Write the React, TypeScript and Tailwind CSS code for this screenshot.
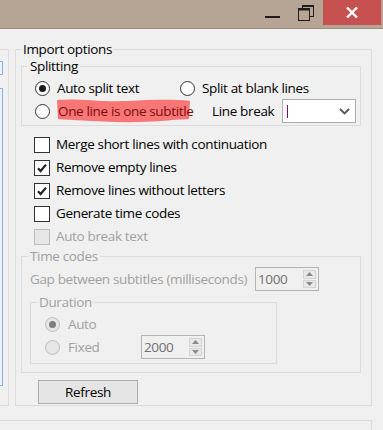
import { ReactNode } from "react";

function Radio({ checked, disabled }: { checked?: boolean; disabled?: boolean }) {
  return (
    <span
      className={`flex h-[15px] w-[15px] shrink-0 items-center justify-center rounded-full border ${
        disabled ? "border-[#bcbcbc] bg-[#e6e6e6]" : "border-[#333333] bg-white"
      }`}
    >
      {checked && (
        <span className={`h-[7px] w-[7px] rounded-full ${disabled ? "bg-[#7d7d7d]" : "bg-[#1b1b1b]"}`} />
      )}
    </span>
  );
}

function Checkbox({ checked, disabled }: { checked?: boolean; disabled?: boolean }) {
  return (
    <span
      className={`flex h-[16px] w-[16px] shrink-0 items-center justify-center border ${
        disabled ? "border-[#bcbcbc] bg-[#e6e6e6]" : "border-[#333333] bg-white"
      }`}
    >
      {checked && (
        <svg width="12" height="12" viewBox="0 0 12 12">
          <path d="M2 6.2 L4.6 9 L10 2.6" fill="none" stroke="#222" strokeWidth="2.2" />
        </svg>
      )}
    </span>
  );
}

function Spin({ value }: { value: string }) {
  return (
    <div className="flex h-[24px] w-[64px] shrink-0 items-stretch border border-[#b4b4b4] bg-[#f0f0f0]">
      <span className="flex flex-1 items-center pl-[2px] text-[#6f6f6f]">{value}</span>
      <div className="my-[2px] mr-[2px] flex w-[13px] flex-col gap-[1px]">
        <span className="flex flex-1 items-center justify-center border border-[#d4d4d4] bg-[#e8e8e8]">
          <svg width="7" height="4" viewBox="0 0 7 4">
            <path d="M0 4 L3.5 0 L7 4 Z" fill="#8a8a8a" />
          </svg>
        </span>
        <span className="flex flex-1 items-center justify-center border border-[#d4d4d4] bg-[#e8e8e8]">
          <svg width="7" height="4" viewBox="0 0 7 4">
            <path d="M0 0 L3.5 4 L7 0 Z" fill="#8a8a8a" />
          </svg>
        </span>
      </div>
    </div>
  );
}

function Group({
  title,
  disabled,
  className,
  children,
}: {
  title: string;
  disabled?: boolean;
  className?: string;
  children: ReactNode;
}) {
  return (
    <fieldset className={`border border-[#dcdcdc] ${className ?? ""}`}>
      <legend
        className={`ml-[6px] px-[2px] leading-[16px] ${disabled ? "text-[#a0a0a0]" : "text-black"}`}
      >
        {title}
      </legend>
      {children}
    </fieldset>
  );
}

export default function App() {
  const checks = [
    { label: "Merge short lines with continuation", checked: false },
    { label: "Remove empty lines", checked: true },
    { label: "Remove lines without letters", checked: true },
    { label: "Generate time codes", checked: false },
  ];

  return (
    <div className="flex h-[430px] w-[383px] flex-col overflow-hidden bg-[#f0f0f0] font-['Open_Sans',sans-serif] text-[13.5px] tracking-[-0.35px] text-black">
      {/* title bar */}
      <div className="flex h-[29px] shrink-0 items-start justify-end border-b border-[#9e8e7e] bg-[#b6a595]">
        <div className="flex h-[25px] w-[34px] flex-col items-center justify-end pb-[7px]">
          <div className="h-[2px] w-[15px] bg-[#1e1e1e]" />
        </div>
        <div className="flex h-[25px] w-[34px] items-center justify-center">
          <svg width="16" height="16" viewBox="0 0 16 16">
            <rect x="4.5" y="0.5" width="11" height="11" fill="none" stroke="#1e1e1e" />
            <rect x="4" y="0" width="12" height="2" fill="#1e1e1e" />
            <rect x="0.5" y="3.5" width="11" height="12" fill="#b6a595" stroke="#1e1e1e" />
            <rect x="0" y="3" width="12" height="2.5" fill="#1e1e1e" />
          </svg>
        </div>
        <div className="mr-[2px] flex h-[25px] w-[58px] items-center justify-center bg-[#c75050]">
          <svg width="12" height="11" viewBox="0 0 12 11">
            <path d="M1 0.5 L11 10.5 M11 0.5 L1 10.5" stroke="#fff" strokeWidth="2.4" />
          </svg>
        </div>
      </div>

      {/* main area */}
      <div className="flex items-start pt-[12px]">
        {/* left list panel */}
        <div className="mt-[8px] flex h-[357px] w-[9px] flex-col border-y border-r border-[#dcdcdc]">
          <div className="mt-[11px] h-[14px] w-[3px] border-y border-r border-[#7eb4ea]" />
          <div className="mt-[13px] h-[298px] w-[3px] border-y border-r border-[#7eb4ea]" />
        </div>

        <fieldset className="ml-[6px] w-[357px] border border-[#dcdcdc] pb-[1px]">
          <legend className="ml-[5px] px-[2px] leading-[16px]">Import options</legend>

          <Group title="Splitting" className="ml-[5px] mt-[1px] w-[340px] pb-[2px] pt-[3px]">
            <div className="flex h-[22px] items-center pl-[13px]">
              <div className="flex w-[145px] items-center gap-[7px]">
                <Radio checked />
                <span>Auto split text</span>
              </div>
              <div className="flex items-center gap-[7px]">
                <Radio />
                <span>Split at blank lines</span>
              </div>
            </div>
            <div className="flex h-[24px] items-center pl-[13px]">
              <div className="flex w-[177px] items-center gap-[8px]">
                <Radio />
                <span className="relative whitespace-nowrap text-[#7c0c0c]">
                  <svg
                    className="absolute left-[-1px] top-[-3px]"
                    width="134"
                    height="26"
                    viewBox="0 0 134 26"
                  >
                    <path
                      d="M0 2 C20 0 40 4 70 3 C95 2 115 1 133 3 L132 21 C110 22 90 25 60 24 C35 23 15 22 1 21 Z"
                      fill="#f87676"
                    />
                  </svg>
                  <span className="relative">One line is one subtitle</span>
                </span>
              </div>
              <span className="w-[70px] whitespace-nowrap">Line break</span>
              <div className="flex h-[24px] w-[74px] items-center border border-[#acacac] bg-white pl-[4px]">
                <span className="h-[13px] w-[1px] bg-[#800080]" />
                <svg className="ml-auto mr-[5px]" width="11" height="7" viewBox="0 0 11 7">
                  <path d="M1 1 L5.5 5.5 L10 1" fill="none" stroke="#555" strokeWidth="1.8" />
                </svg>
              </div>
            </div>
          </Group>

          <div className="mt-[7px] flex flex-col">
            {checks.map((c) => (
              <div key={c.label} className="flex h-[23px] items-center gap-[6px] pl-[18px]">
                <Checkbox checked={c.checked} />
                <span className="whitespace-nowrap">{c.label}</span>
              </div>
            ))}
            <div className="flex h-[23px] items-center gap-[6px] pl-[18px]">
              <Checkbox disabled />
              <span className="whitespace-nowrap text-[#a0a0a0]">Auto break text</span>
            </div>
          </div>

          <Group title="Time codes" disabled className="ml-[5px] w-[340px] pb-[8px] pt-[3px]">
            <div className="flex h-[24px] items-center pl-[8px]">
              <span className="w-[225px] shrink-0 whitespace-nowrap text-[#a0a0a0]">
                Gap between subtitles (milliseconds)
              </span>
              <Spin value="1000" />
            </div>
            <Group title="Duration" disabled className="ml-[8px] mt-[3px] w-[247px] pb-[4px] pt-[3px]">
              <div className="flex h-[22px] items-center gap-[8px] pl-[14px]">
                <Radio checked disabled />
                <span className="text-[#a0a0a0]">Auto</span>
              </div>
              <div className="flex h-[24px] items-center pl-[14px]">
                <div className="flex w-[96px] items-center gap-[8px]">
                  <Radio disabled />
                  <span className="text-[#a0a0a0]">Fixed</span>
                </div>
                <Spin value="2000" />
              </div>
            </Group>
          </Group>

          <button className="ml-[22px] mt-[7px] flex h-[24px] w-[100px] items-center justify-center border border-[#adadad] bg-[#e5e5e5] text-black">
            Refresh
          </button>
        </fieldset>
      </div>

      {/* lower panel */}
      <div className="mt-[14px] h-[20px] w-[372px] border-r border-t border-[#dcdcdc]" />
    </div>
  );
}
